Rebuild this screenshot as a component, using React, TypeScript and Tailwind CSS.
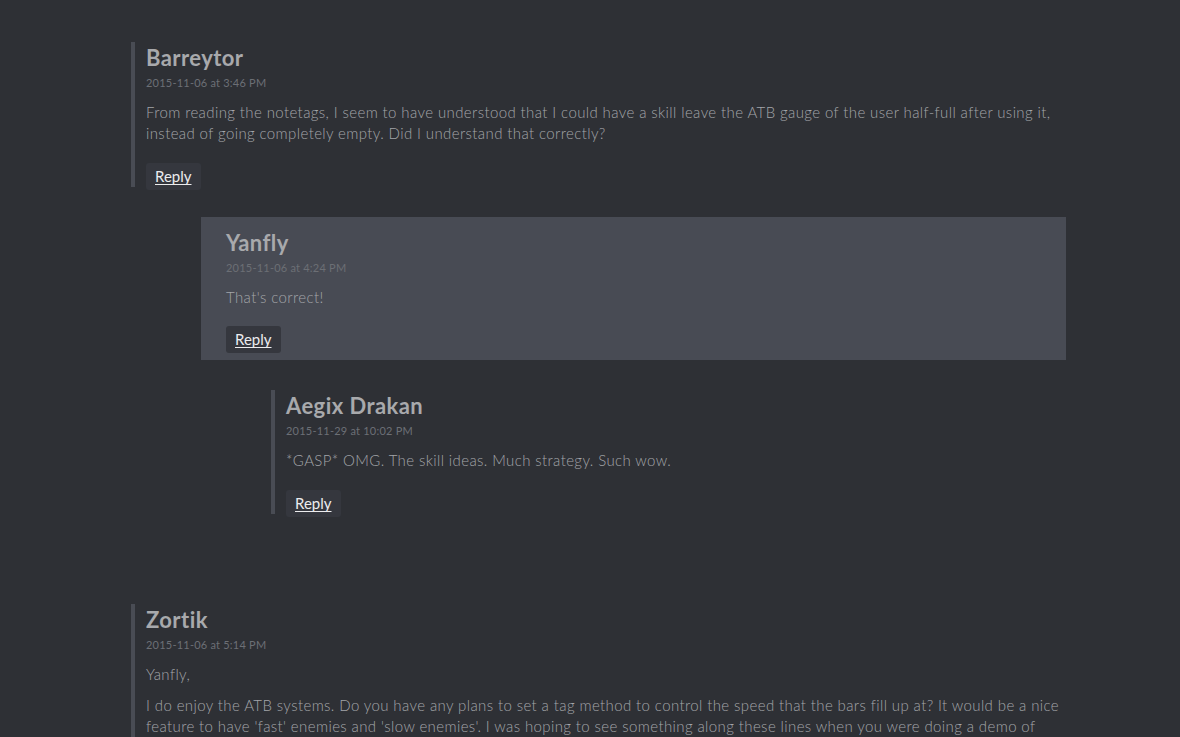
import React from 'react';

type C = {
  name: string;
  date: string;
  body: string[];
  depth: number;
  author?: boolean;
  reply?: boolean;
};

const COMMENTS: C[] = [
  {
    name: 'Barreytor', date: '2015-11-06 at 3:46 PM', depth: 0, reply: true,
    body: ['From reading the notetags, I seem to have understood that I could have a skill leave the ATB gauge of the user half-full after using it, instead of going completely empty. Did I understand that correctly?'],
  },
  { name: 'Yanfly', date: '2015-11-06 at 4:24 PM', depth: 1, author: true, reply: true, body: ["That's correct!"] },
  { name: 'Aegix Drakan', date: '2015-11-29 at 10:02 PM', depth: 2, reply: true, body: ['*GASP* OMG. The skill ideas. Much strategy. Such wow.'] },
];

const ZORTIK: C = {
  name: 'Zortik', date: '2015-11-06 at 5:14 PM', depth: 0,
  body: [
    'Yanfly,',
    "I do enjoy the ATB systems. Do you have any plans to set a tag method to control the speed that the bars fill up at? It would be a nice feature to have 'fast' enemies and 'slow enemies'. I was hoping to see something along these lines when you were doing a demo of the skills, but I didn't see any options for it in the notetags. Is that something you might be able to add?",
  ],
};

const indent = ['ml-0', 'ml-[70px]', 'ml-[140px]'];

function Comment({ c }: { c: C }) {
  const box = c.author
    ? 'bg-[#484b54] pl-[25px] pr-[15px] pt-[13px] pb-[7px]'
    : 'border-l-4 border-[#494c54] pl-[11px] pr-[6px] pt-[3px]';
  return (
    <div className={`${indent[c.depth]} ${box}`}>
      <h3 className="text-[22px] leading-[26px] font-bold tracking-[0.02em] text-[#a8a9ac]">{c.name}</h3>
      <div className="mt-[4px] text-[11px] leading-[16px] tracking-[0.02em] text-[#6c6f75]">{c.date}</div>
      <div className="mt-[11px] text-[15px] leading-[21px] tracking-[0.026em] text-[#a3a5a9] font-light space-y-[10px]">
        {c.body.map((p, i) => <p key={i}>{p}</p>)}
      </div>
      {c.reply && (
        <div className={c.author ? 'mt-[18px]' : 'mt-[19px] -mb-[3px]'}>
          <button className="px-[9px] h-[27px] rounded-[3px] bg-[#35373e] text-[15px] text-[#ececee] underline underline-offset-2 font-normal">
            Reply
          </button>
        </div>
      )}
    </div>
  );
}

export default function App() {
  return (
    <div className="h-[737px] bg-[#2e3035] overflow-hidden" style={{ fontFamily: 'Lato, "Open Sans", sans-serif' }}>
      <div className="ml-[131px] w-[935px] pt-[42px]">
        <div className="flex flex-col gap-[30px]">
          {COMMENTS.map(c => <Comment key={c.name} c={c} />)}
        </div>
        <div className="mt-[90px]">
          <Comment c={ZORTIK} />
        </div>
      </div>
    </div>
  );
}
